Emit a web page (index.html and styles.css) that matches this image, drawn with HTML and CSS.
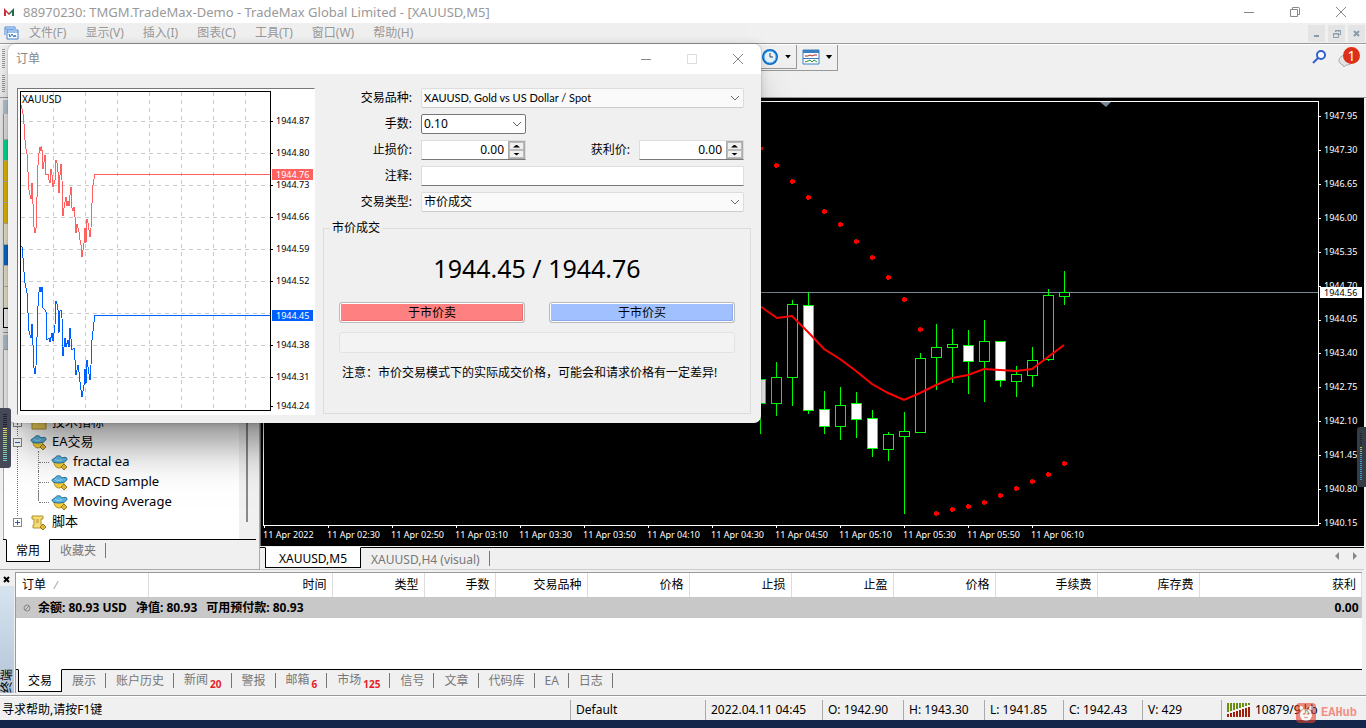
FILE: index.html
```html
<!DOCTYPE html>
<html lang="zh-CN">
	<head>
		<meta charset="UTF-8">
		<title>88970230: TMGM.TradeMax-Demo</title>
		<link rel="stylesheet" href="styles.css">
	</head>
	<body>
		<svg class="defs" width="0" height="0">
			<defs>
				<symbol id="expert" viewBox="0 0 18 16">
					<path d="M3 7h10c0 3-2 6-5 6S3 10 3 7z" fill="#f5cf3c" stroke="#b8921c"/>
					<path d="M1 5c0-1 2-1 3-2 1-3 6-3 7 0 2-1 5-1 5 1 0 2-4 4-8 4S1 7 1 5z" fill="#5cb2de" stroke="#22719c"/>
					<path d="M4 4c2 2 5 2 7 0" fill="none" stroke="#a4d8f0"/>
					<path d="M13 9l3 3-3 3-3-3z" fill="#e2b93b" stroke="#9a7a1c"/>
				</symbol>
				<symbol id="chevron" viewBox="0 0 10 6">
					<path d="M1 1l4 4 4-4" fill="none" stroke="#666"/>
				</symbol>
			</defs>
		</svg>

		<header class="titlebar">
			<svg class="logo" width="12" height="10" viewBox="0 0 12 10"><path d="M1 9V1l5 5v2L3 5v4z" fill="#c8323c"/><path d="M11 9V1L6 6v2l3-3v4z" fill="#1f6b45"/></svg>
			<span class="caption">88970230: TMGM.TradeMax-Demo - TradeMax Global Limited - [XAUUSD,M5]</span>
			<div class="winbtns">
				<button aria-label="最小化"><svg width="12" height="12"><path d="M1 6.500h10" stroke="#888"/></svg></button>
				<button aria-label="还原"><svg width="12" height="12"><path d="M3.500 3V1.500h6a1 1 0 0 1 1 1v6H9M1.500 3.500h7v7h-7z" fill="none" stroke="#888"/></svg></button>
				<button aria-label="关闭"><svg width="12" height="12"><path d="M1 1l10 10M11 1L1 11" stroke="#888"/></svg></button>
			</div>
		</header>

		<nav class="menubar">
			<svg class="appicon" width="15" height="14" viewBox="0 0 15 14"><path d="M1 9V1h10v2M1 3h9M3 13V4h11v9zM3 6h11" fill="#fff" stroke="#3f83d8"/><path d="M5 8l1 3 2-3 2 3 1-2 1 2" fill="none" stroke="#2f6fc4"/></svg>
			<a href="#">文件(F)</a>
			<a href="#">显示(V)</a>
			<a href="#">插入(I)</a>
			<a href="#">图表(C)</a>
			<a href="#">工具(T)</a>
			<a href="#">窗口(W)</a>
			<a href="#">帮助(H)</a>
			<div class="mdibtns">
				<button aria-label="最小化窗口"><svg width="9" height="9"><path d="M2 7h5" stroke="#8a9bab" stroke-width="2"/></svg></button>
				<button aria-label="还原窗口"><svg width="9" height="9"><path d="M3.500 3V1.500h5v4H7M1.500 4.500h5v4h-5zM1 5h6M3 2h6" fill="none" stroke="#8a9bab"/></svg></button>
				<button aria-label="关闭窗口"><svg width="9" height="9"><path d="M2 2l5 5M7 2L2 7" stroke="#8a9bab" stroke-width="2"/></svg></button>
			</div>
		</nav>

		<div class="toolbar">
			<div class="grips"><i></i><i></i></div>
			<div class="tools">
				<button class="tool" aria-label="周期">
					<svg width="18" height="18"><circle cx="9" cy="9" r="7" fill="#e8f4fd" stroke="#0b6cc8" stroke-width="2"/><circle cx="9" cy="9" r="6" fill="none" stroke="#58b4f0"/><path d="M9 5v4h3" fill="none" stroke="#345"/></svg>
					<b class="arrow"></b>
				</button>
				<button class="tool" aria-label="模板">
					<svg width="18" height="16"><path d="M1 1h16v14H1z" fill="#fff" stroke="#3a7fc0"/><path d="M1 1h16v3H1z" fill="#3a7fc0"/><path d="M1 9.500h16" stroke="#3a7fc0"/><path d="M3 7h3l2-1 2 1 2-1h3" fill="none" stroke="#a8281c"/><path d="M3 13l3-1 2-1 2 2 2-2 3 2" fill="none" stroke="#2a9434"/></svg>
					<b class="arrow"></b>
				</button>
			</div>
			<div class="tools-right">
				<button class="plain" aria-label="搜索"><svg width="14" height="14"><circle cx="9" cy="5" r="4" fill="#fff" stroke="#2f5fd0" stroke-width="2"/><path d="M6 8l-5 5" stroke="#2f5fd0" stroke-width="2"/></svg></button>
				<button class="plain chat" aria-label="消息">
					<svg width="16" height="14"><path d="M8 1c4 0 7 2 7 5s-3 5-7 5l-2 2-1-2C2 10 1 8 1 6s3-5 7-5z" fill="#e4e4e8" stroke="#aaa"/></svg>
					<span class="badge">1</span>
				</button>
			</div>
		</div>

		<main class="workspace">
			<aside class="side">
				<section class="watch">
					<div class="panehead"></div>
					<ul class="bands">
						<li></li><li class="green"></li><li class="yellow"></li><li class="yellow"></li><li class="yellow"></li>
						<li class="cream"></li><li class="blue"></li><li class="cream"></li><li class="cream"></li>
					</ul>
					<div class="watchtab"></div>
				</section>
				<section class="navigator">
					<div class="panehead"></div>
					<div class="treebox">
						<ul class="tree">
							<li><i class="box plus"></i><svg width="18" height="16"><path d="M2 1h14v13H2z" fill="#f2d75c" stroke="#b0922a"/></svg>技术指标</li>
							<li><i class="box"></i><svg width="18" height="16"><use href="#expert"/></svg>EA交易
								<ul>
									<li><svg width="18" height="16"><use href="#expert"/></svg>fractal ea</li>
									<li><svg width="18" height="16"><use href="#expert"/></svg>MACD Sample</li>
									<li><svg width="18" height="16"><use href="#expert"/></svg>Moving Average</li>
								</ul>
							</li>
							<li><i class="box plus"></i><svg width="18" height="16"><path d="M2 1h11v3h-2v6h3v3H3v-3h1V4H2z" fill="#f5dc78" stroke="#b0922a"/><path d="M6 5h3M6 7h3" stroke="#b0922a"/><path d="M13 9l3 3-3 3-3-3z" fill="#e2b93b" stroke="#9a7a1c"/></svg>脚本</li>
						</ul>
						<div class="scroll"><i></i></div>
					</div>
					<div class="tabs">
						<button class="tab active">常用</button>
						<button class="tab">收藏夹</button>
					</div>
				</section>
			</aside>

			<section class="charts">
				<div class="chart">
					<div class="plot">
						<svg width="100%" height="100%">
							<g id="market" transform="translate(-264 -102)">
								<path d="M1100 102h11l-5 5z" fill="#778899"/>
								<path d="M264 292.500h4000" stroke="#778899"/>
								<g id="candles" stroke="#0f0"></g>
								<polyline points="744,292 760,306 777,318 792,316 808,332 824,349 840,359 856,371 872,384 888,393 904,400 920,393 936,385 952,378 968,375 984,369 1000,370 1016,371 1032,369 1048,357 1064,345" fill="none" stroke="#f00" stroke-width="2"/>
								<g id="sar" fill="#f00"></g>
							</g>
						</svg>
					</div>
					<div class="prices">
						<span>1947.95</span><span>1947.30</span><span>1946.65</span><span>1946.00</span><span>1945.35</span><span>1944.70</span><span>1944.05</span><span>1943.40</span><span>1942.75</span><span>1942.10</span><span>1941.45</span><span>1940.80</span><span>1940.15</span>
						<b class="last">1944.56</b>
					</div>
					<div class="times">
						<span>11 Apr 2022</span><span>11 Apr 02:30</span><span>11 Apr 02:50</span><span>11 Apr 03:10</span><span>11 Apr 03:30</span><span>11 Apr 03:50</span><span>11 Apr 04:10</span><span>11 Apr 04:30</span><span>11 Apr 04:50</span><span>11 Apr 05:10</span><span>11 Apr 05:30</span><span>11 Apr 05:50</span><span>11 Apr 06:10</span>
					</div>
				</div>
				<div class="tabs">
					<button class="tab active">XAUUSD,M5</button>
					<button class="tab">XAUUSD,H4 (visual)</button>
					<div class="pager"><svg width="24" height="8"><path d="M5 0v8L1 4zM19 0v8l4-4z" fill="#888"/></svg></div>
				</div>
			</section>
		</main>

		<section class="terminal">
			<div class="strip">
				<button class="close" aria-label="关闭终端"><svg width="7" height="7"><path d="M1 1l5 5M6 1L1 6" stroke="#000" stroke-width="2"/></svg></button>
				<div class="striplabel">终端</div>
			</div>
			<div class="termbody">
				<table>
					<colgroup>
						<col class="c-order"><col class="c-time"><col class="c-type"><col class="c-lots"><col class="c-symbol">
						<col class="c-num"><col class="c-num"><col class="c-num"><col class="c-num"><col class="c-num"><col class="c-num"><col>
					</colgroup>
					<thead>
						<tr><th>订单 <small>⁄</small></th><th>时间</th><th>类型</th><th>手数</th><th>交易品种</th><th>价格</th><th>止损</th><th>止盈</th><th>价格</th><th>手续费</th><th>库存费</th><th>获利</th></tr>
					</thead>
					<tbody>
						<tr>
							<td colspan="11"><svg width="8" height="8"><circle cx="4" cy="4" r="3" fill="none" stroke="#888"/><path d="M2 6l4-4" stroke="#888"/></svg><span>余额: 80.93 USD</span><span>净值: 80.93</span><span>可用预付款: 80.93</span></td>
							<td>0.00</td>
						</tr>
					</tbody>
				</table>
				<div class="tabs">
					<button class="tab active">交易</button>
					<button class="tab">展示</button>
					<button class="tab">账户历史</button>
					<button class="tab">新闻<sub>20</sub></button>
					<button class="tab">警报</button>
					<button class="tab">邮箱<sub>6</sub></button>
					<button class="tab">市场<sub>125</sub></button>
					<button class="tab">信号</button>
					<button class="tab">文章</button>
					<button class="tab">代码库</button>
					<button class="tab">EA</button>
					<button class="tab">日志</button>
				</div>
			</div>
		</section>

		<footer class="status">
			<span class="hint">寻求帮助,请按F1键</span>
			<span class="s-profile">Default</span>
			<span class="s-date">2022.04.11 04:45</span>
			<span class="s-open">O: 1942.90</span>
			<span class="s-open">H: 1943.30</span>
			<span class="s-low">L: 1941.85</span>
			<span class="s-low">C: 1942.43</span>
			<span class="s-low">V: 429</span>
			<span class="s-net"><svg width="24" height="14"><path d="M1 0v9M4 0v8M7 0v7M10 0v6M13 0v5M16 0v4M19 0v3M22 0v2" stroke="#6b8e12" stroke-width="2"/><path d="M1 14v-3M4 14v-4M7 14v-5M10 14V8M13 14V7M16 14V6M19 14V5M22 14V4" stroke="#a0200c" stroke-width="2"/></svg>10879/9 kb</span>
		</footer>
		<div class="taskbar"></div>

		<div class="dialog" role="dialog" aria-label="订单">
			<div class="dlgtitle">
				<span>订单</span>
				<div class="winbtns">
					<button aria-label="最小化"><svg width="12" height="12"><path d="M1 6.500h10" stroke="#888"/></svg></button>
					<button aria-label="最大化" disabled><svg width="12" height="12"><path d="M1.500 1.500h9v9h-9z" fill="none" stroke="#ddd"/></svg></button>
					<button aria-label="关闭"><svg width="12" height="12"><path d="M1 1l10 10M11 1L1 11" stroke="#888"/></svg></button>
				</div>
			</div>
			<div class="dlgbody">
				<div class="ticks">
					<div class="tickplot">
						<svg width="100%" height="100%">
							<g transform="translate(-21 -92)">
								<path d="M53.500 92v320M85.500 92v320M117.500 92v320M149.500 92v320M181.500 92v320M213.500 92v320M245.500 92v320M21 121.500h250M21 153.500h250M21 185.500h250M21 217.500h250M21 249.500h250M21 281.500h250M21 313.500h250M21 345.500h250M21 377.500h250" stroke="#c8c8c8" stroke-dasharray="4 4"/>
								<g fill="none" shape-rendering="crispEdges">
									<polyline stroke="#ff6060" points="21,105 22,109 23,114 24,124 25,140 26,149 27,154 28,172 29,190 30,195 31,199 32,183 33,204 34,227 35,233 36,228 37,197 38,165 39,153 40,147 41,151 41,146 42,150 43,169 45,155 46,175 48,174 49,180 50,183 51,169 52,175 53,187 55,180 56,160 57,163 58,172 59,193 60,175 61,164 62,180 63,216 64,208 66,197 67,206 68,201 69,206 70,195 71,187 71,205 73,211 74,207 75,217 76,233 77,224 79,232 80,240 81,245 82,257 84,243 85,228 86,243 87,219 88,223 90,237 91,228 92,203 93,185 95,174 271,174"/>
									<polyline stroke="#0060ff" points="21,246 22,247 23,258 24,272 25,283 26,288 27,293 28,313 29,331 30,335 31,338 32,324 33,345 34,368 35,374 36,366 37,337 38,306 39,292 40,287 41,292 42,287 43,308 45,310 46,312 47,340 49,338 50,342 52,333 53,341 55,325 56,301 57,304 58,310 59,333 60,311 61,310 62,318 63,356 65,338 66,347 68,340 69,347 70,328 72,350 74,348 75,360 76,375 78,365 79,372 80,382 82,397 84,385 85,369 86,384 87,360 88,367 90,380 91,365 92,340 94,322 95,315 271,315"/>
								</g>
							</g>
						</svg>
						<span class="symbol">XAUUSD</span>
					</div>
					<div class="tickprices">
						<span>1944.87</span><span>1944.80</span><span>1944.73</span><span>1944.66</span><span>1944.59</span><span>1944.52</span><span></span><span>1944.38</span><span>1944.31</span><span>1944.24</span>
						<b class="ask">1944.76</b>
						<b class="bid">1944.45</b>
					</div>
				</div>
				<form class="order">
					<div class="fields">
						<label for="symbol">交易品种:</label>
						<div class="combo wide"><select id="symbol"><option>XAUUSD, Gold vs US Dollar / Spot</option></select><svg width="10" height="6"><use href="#chevron"/></svg></div>
						<label for="lots">手数:</label>
						<div class="combo lots"><select id="lots"><option>0.10</option></select><svg width="10" height="6"><use href="#chevron"/></svg></div>
						<label for="sl">止损价:</label>
						<div class="spin"><input id="sl" type="text" value="0.00"><div class="updown"><button type="button" aria-label="增加止损价"><i class="up"></i></button><button type="button" aria-label="减少止损价"><i class="down"></i></button></div></div>
						<label for="tp">获利价:</label>
						<div class="spin"><input id="tp" type="text" value="0.00"><div class="updown"><button type="button" aria-label="增加获利价"><i class="up"></i></button><button type="button" aria-label="减少获利价"><i class="down"></i></button></div></div>
						<label for="comment">注释:</label>
						<input class="comment wide" id="comment" type="text">
						<label for="kind">交易类型:</label>
						<div class="combo wide"><select id="kind"><option>市价成交</option></select><svg width="10" height="6"><use href="#chevron"/></svg></div>
					</div>
					<fieldset>
						<legend>市价成交</legend>
						<div class="quote">1944.45 / 1944.76</div>
						<div class="deal">
							<button type="button" class="sell">于市价卖</button>
							<button type="button" class="buy">于市价买</button>
						</div>
						<button type="button" class="blank" aria-label="平仓" disabled></button>
						<p>注意：市价交易模式下的实际成交价格，可能会和请求价格有一定差异!</p>
					</fieldset>
				</form>
			</div>
		</div>

		<div class="meter left"><i></i></div>
		<div class="meter right"><i></i></div>
		<div class="watermark"><svg width="20" height="20"><rect width="20" height="20" rx="4" fill="#e8402c"/><circle cx="10" cy="12" r="6" fill="#fff"/><circle cx="5" cy="5" r="2" fill="#fff"/><circle cx="15" cy="5" r="2" fill="#fff"/><circle cx="8" cy="11" r="1" fill="#e8402c"/><circle cx="12" cy="11" r="1" fill="#e8402c"/><path d="M8 14c1 1 3 1 4 0" fill="none" stroke="#e8402c"/></svg>EAHub</div>

		<script>
			//x, high, top, bottom, low, 1=bear
			var bars=[
				[760,370,379,403,434,1],[776,362,377,403,416,0],[792,300,304,377,406,0],[808,292,305,410,414,1],
				[824,391,409,426,434,1],[840,387,405,426,440,0],[856,392,403,419,438,1],[872,410,418,448,457,1],
				[888,432,434,449,461,0],[904,412,431,436,514,0],[920,353,358,432,433,0],[936,324,347,357,390,0],
				[952,329,344,347,383,0],[968,330,345,361,394,1],[984,320,341,361,402,0],[1000,341,341,380,387,1],
				[1016,366,374,381,397,0],[1032,347,360,375,387,0],[1048,289,295,359,361,0],[1064,271,292,296,305,0]
			];
			var dots=[[760,148],[776,165],[792,181],[808,197],[824,211],[840,224],[856,241],[872,257],[888,277],[904,299],[920,329],
				[936,513],[952,509],[968,506],[984,502],[1000,495],[1016,488],[1032,481],[1048,474],[1064,463]];
			var html='';
			for(var i=0;i<bars.length;i++){
				var b=bars[i];
				html+='<path d="M'+(b[0]+0.5)+' '+b[1]+'V'+b[4]+'"/>';
				html+='<rect x="'+(b[0]-4.5)+'" y="'+(b[2]+0.5)+'" width="10" height="'+(b[3]-b[2])+'" fill="'+(b[5]?'#fff':'#000')+'"/>';
			}
			document.getElementById('candles').innerHTML=html;
			html='';
			for(var i=0;i<dots.length;i++){
				html+='<path d="M'+(dots[i][0]-2)+' '+(dots[i][1]-1)+'h1v-1h2v1h2v3h-2v1h-2v-1h-1z"/>';
			}
			document.getElementById('sar').innerHTML=html;
		</script>
	</body>
</html>
```
FILE: styles.css
```css
*{margin:0;padding:0;box-sizing:border-box;}
html{height: 100%;}
body{
	position: relative;
	display: flex;
	flex-direction: column;
	min-height: 100%;
	background: #f0f0f0;
	font: 12px/16px "Noto Sans","Noto Sans CJK SC",sans-serif;
	color: #000;
	overflow: hidden;
}
ul{list-style: none;}
a{color: inherit;text-decoration: none;}
button,input,select{font: inherit;color: inherit;}
button{border: 0;background: none;}
svg{flex: none;}
.defs{position: absolute;}

/* title and menu */
.titlebar{
	display: flex;
	align-items: center;
	height: 23px;
	padding: 0 2px 0 3px;
	background: #fff;
	color: #999;
}
.caption{margin-left: 8px;font-size: 13px;}
.winbtns{display: flex;margin-left: auto;}
.winbtns button{
	display: flex;
	align-items: center;
	justify-content: center;
	width: 46px;
	height: 20px;
}
.menubar{
	display: flex;
	align-items: center;
	gap: 1px;
	height: 21px;
	padding: 0 1px 0 4px;
	border-bottom: 1px solid #999;
	color: #999;
}
.menubar a{padding: 0 9px;}
.mdibtns{display: flex;gap: 3px;margin-left: auto;}
.mdibtns button{
	display: flex;
	align-items: center;
	justify-content: center;
	width: 17px;
	height: 17px;
	background: #e4e4e4;
}

/* toolbar */
.toolbar{
	display: flex;
	height: 54px;
	border-top: 1px solid #fff;
	border-bottom: 1px solid #999;
}
.grips{
	display: flex;
	flex-direction: column;
	gap: 7px;
	width: 8px;
	padding: 4px 2px;
}
.grips i{height: 20px;width: 3px;background: repeating-linear-gradient(#999 0 1px,#f0f0f0 1px 2px);}
.tools{
	display: flex;
	justify-content: flex-end;
	width: 830px;
	height: 26px;
	border-right: 1px solid #999;
	border-bottom: 1px solid #999;
}
.tool{
	display: flex;
	align-items: center;
	gap: 5px;
	height: 24px;
	padding: 0 4px 0 5px;
}
.tool:first-child{border-right: 1px solid #999;border-bottom: 1px solid #999;}
.arrow{
	width: 8px;
	height: 4px;
	background: #000;
	clip-path: polygon(10% 0,90% 0,50% 100%);
}
.tools-right{
	display: flex;
	align-items: flex-start;
	gap: 12px;
	margin-left: auto;
	padding: 5px 12px;
}
.plain{display: block;}
.chat{position: relative;padding-top: 4px;}
.badge{
	position: absolute;
	left: 5px;
	top: -3px;
	width: 17px;
	height: 17px;
	border-radius: 50%;
	background: #de3018;
	color: #fff;
	font-size: 14px;
	line-height: 17px;
}

/* left panes */
.workspace{display: flex;flex: 1;min-height: 0;}
.side{
	display: flex;
	flex-direction: column;
	width: 260px;
	padding: 2px 3px 2px 3px;
	border-right: 1px solid #aaa;
	border-bottom: 1px solid #aaa;
}
.panehead{height: 14px;background: #b9c8d6;}
.watch{height: 233px;border-bottom: 1px solid #999;}
.bands{border-left: 1px solid #999;}
.bands li{height: 21px;border-bottom: 1px solid #bbb;}
.bands li:first-child{height: 26px;}
.bands .green{background: #00e89c;}
.bands .yellow{background: #f0c000;}
.bands .cream{background: #f7f2d6;}
.bands .blue{background: #0a6cd0;}
.watchtab{height: 20px;width: 44px;border: 1px solid #000;background: #fff;}
.navigator{display: flex;flex-direction: column;flex: 1;padding-top: 2px;}
.treebox{
	display: flex;
	flex: 1;
	border: 1px solid #aaa;
	border-width: 1px 0 0 1px;
	background: #fff;
}
.tree{
	display: flex;
	flex-direction: column;
	flex: 1;
	justify-content: flex-end;
	padding: 0 0 8px 9px;
	font-size: 13px;
}
.tree li{line-height: 20px;}
.tree > li{position: relative;}
.tree > li:not(:last-child)::after{
	content: "";
	position: absolute;
	left: 4px;
	top: 15px;
	bottom: -5px;
	border-left: 1px dotted #777;
}
.tree svg{margin: 0 4px 0 8px;vertical-align: middle;}
.tree ul{margin-left: 25px;}
.tree ul li{border-left: 1px dotted #777;}
.tree ul li:last-child{
	border-left: 0;
	background: linear-gradient(#888,#888) 0 0/1px 10px no-repeat;
	padding-left: 1px;
}
.tree ul li::before{
	content: "";
	display: inline-block;
	width: 10px;
	border-top: 1px dotted #777;
	vertical-align: middle;
}
.tree ul svg{margin: 0 4px 0 2px;}
.box{
	display: inline-block;
	width: 9px;
	height: 9px;
	border: 1px solid #888;
	background: linear-gradient(#335ea8,#335ea8) center/5px 1px no-repeat #fff;
	vertical-align: middle;
}
.plus{background: linear-gradient(#335ea8,#335ea8) center/5px 1px no-repeat,linear-gradient(#335ea8,#335ea8) center/1px 5px no-repeat #fff;}
.scroll{width: 17px;background: #f0f0f0;}
.scroll i{display: block;width: 2px;height: 172px;margin-left: 7px;background: #888;}

/* tabs */
.tabs{
	display: flex;
	align-items: flex-start;
	border-top: 1px solid #000;
	color: #777;
}
.tab{position: relative;height: 21px;padding: 0 10px;}
.tab:not(.active)::after{
	content: "";
	position: absolute;
	right: 0;
	top: 3px;
	height: 15px;
	border-right: 1px solid #777;
}
.tab.active{
	height: 23px;
	margin: -1px 0 0 2px;
	padding: 0 9px;
	border: 1px solid #000;
	border-top-color: #fff;
	background: #fff;
	color: #000;
}
.tab sub{
	margin-left: 2px;
	font-size: 10px;
	font-weight: bold;
	line-height: 10px;
	color: #e81c28;
}
.navigator .tabs{height: 28px;padding-left: 1px;}

/* main chart */
.charts{display: flex;flex-direction: column;flex: 1;min-width: 0;padding-right: 2px;}
.chart{
	display: grid;
	grid-template: 1fr 20px / 1fr 45px;
	flex: 1;
	min-height: 0;
	padding: 3px 0 0 2px;
	border-left: 1px solid #696969;
	background: #000;
	color: #fff;
	font-size: 9px;
}
.plot{min-width: 0;min-height: 0;border: 1px solid #fff;}
.plot svg,.tickplot svg{display: block;}
.prices{
	position: relative;
	grid-row: 1 / 3;
	grid-column: 2;
	display: flex;
	flex-direction: column;
	justify-content: space-between;
	padding: 9px 0 17px;
	line-height: 12px;
}
.prices span::before,.tickprices span:not(:empty)::before{
	content: "";
	display: inline-block;
	width: 2px;
	margin-right: 3px;
	border-top: 1px solid;
	vertical-align: middle;
}
.last,.ask,.bid{
	position: absolute;
	left: 1px;
	right: 2px;
	padding-left: 4px;
	font-weight: normal;
	line-height: 11px;
}
.last{top: 186px;background: #fff;color: #000;}
.times{display: flex;min-width: 0;overflow: hidden;}
.times span{flex: 0 0 64px;line-height: 18px;white-space: nowrap;}
.times span::before{content: "";display: block;height: 2px;margin-left: 1px;border-left: 1px solid #fff;margin-bottom: -2px;}
.charts .tabs{
	height: 23px;
	margin-top: 1px;
	padding-left: 1px;
	border-bottom: 1px solid #ccc;
}
.charts .tab{height: 21px;padding-top: 2px;}
.charts .tab.active{height: 21px;margin-left: 4px;padding: 2px 13px 0;}
.pager{margin: 4px 6px 0 auto;line-height: 8px;}

/* terminal */
.terminal{
	display: flex;
	height: 126px;
	padding: 2px 4px 2px 0;
	border-bottom: 1px solid #999;
}
.strip{
	display: flex;
	flex-direction: column;
	width: 15px;
	padding-right: 1px;
}
.close{height: 14px;}
.close svg{display: block;margin-left: 3px;}
.striplabel{
	flex: 1;
	background: linear-gradient(#b4c4d6,#d6e4f0);
	writing-mode: vertical-rl;
	text-orientation: sideways;
	transform: rotate(180deg);
	line-height: 14px;
}
.termbody{
	display: flex;
	flex-direction: column;
	flex: 1;
	min-width: 0;
	border-left: 1px solid #999;
	border-top: 1px solid #999;
	background: #fff;
}
.termbody .tabs{margin-top: auto;height: 24px;background: #f0f0f0;}
table{width: 100%;table-layout: fixed;border-collapse: collapse;}
th{
	height: 24px;
	padding-right: 5px;
	border-right: 1px solid #ddd;
	font-weight: normal;
	text-align: right;
}
th:first-child{text-align: left;padding-left: 6px;}
th small{margin-left: 6px;color: #888;}
tbody tr{background: #c8c8c8;font-weight: bold;}
td{height: 21px;padding: 0 3px 0 7px;text-align: right;}
td:first-child{text-align: left;}
td svg{margin-right: 7px;}
td span{margin-right: 9px;}
.c-order{width: 132px;}
.c-time{width: 184px;}
.c-type{width: 92px;}
.c-lots{width: 71px;}
.c-symbol{width: 92px;}
.c-num{width: 102px;}

/* status line */
.status{
	display: flex;
	align-items: center;
	height: 24px;
	padding-top: 2px;
	border-top: 1px solid #fff;
	white-space: nowrap;
}
.status span{
	padding-left: 5px;
	border-left: 1px solid #aaa;
	line-height: 20px;
}
.status .hint{flex: 1;border: 0;padding-left: 2px;}
.s-profile{width: 135px;}
.s-date{width: 117px;}
.s-open{width: 81px;}
.s-low{width: 79px;}
.s-net{display: flex;align-items: center;gap: 4px;width: 145px;}
.taskbar{height: 8px;background: #14274a;}

/* order dialog */
.dialog{
	position: absolute;
	left: 8px;
	top: 44px;
	width: 753px;
	background: #f0f0f0;
	border-radius: 7px;
	overflow: hidden;
	box-shadow: 0 32px 44px -14px rgba(0,0,0,.5),0 0 10px rgba(0,0,0,.15),0 0 1px rgba(0,0,0,.6);
}
.dlgtitle{
	display: flex;
	align-items: center;
	height: 30px;
	padding-left: 8px;
	background: #fff;
	color: #888;
}
.dlgbody{
	display: flex;
	gap: 9px;
	padding: 14px 10px 8px 9px;
}
.ticks{
	display: flex;
	flex: none;
	width: 298px;
	height: 327px;
	padding: 2px 0 1px 2px;
	border: 1px solid #777;
	border-right-color: #fff;
	border-bottom-color: #fff;
	background: #fff;
	font-size: 9px;
}
.tickplot{position: relative;flex: none;width: 251px;height: 320px;border: 1px solid #000;}
.symbol{position: absolute;left: 1px;top: 1px;font-size: 10px;line-height: 12px;}
.tickprices{
	position: relative;
	display: flex;
	flex-direction: column;
	flex: 1;
	padding-top: 14px;
}
.tickprices span{flex: none;height: 32px;line-height: 32px;}
.tickprices span:last-of-type{height: 26px;line-height: 26px;}
.ask,.bid{color: #fff;right: 1px;}
.ask{top: 78px;background: #ff6060;}
.bid{top: 219px;background: #0060ff;}
.order{flex: 1;min-width: 0;}
.fields{
	display: grid;
	grid-template-columns: 88px 105px 95px 1fr;
	grid-auto-rows: 20px;
	gap: 6px 9px;
	align-items: center;
	padding-right: 7px;
}
.fields label{text-align: right;white-space: nowrap;}
.wide{grid-column: 2 / 5;}
.combo{display: grid;align-items: center;height: 20px;}
.combo select{
	grid-area: 1 / 1;
	width: 100%;
	height: 20px;
	padding-left: 2px;
	border: 1px solid #ddd;
	border-bottom-color: #ccc;
	border-radius: 2px;
	background: #fafafa;
	appearance: none;
}
#symbol{font-family: Lato,sans-serif;font-size: 11px;}
.combo svg{grid-area: 1 / 1;justify-self: end;margin-right: 4px;pointer-events: none;}
.lots{grid-column: 2 / 5;width: 105px;}
.lots select{border-color: #777;background: #fff;}
.spin{
	display: flex;
	min-width: 0;
	height: 20px;
	background: #fff;
	border: 1px solid #ddd;
	border-bottom-color: #777;
}
.spin input{flex: 1;min-width: 0;border: 0;background: none;padding-right: 4px;text-align: right;}
.updown{display: flex;flex-direction: column;width: 17px;border: 1px solid #aaa;}
.updown button{
	display: flex;
	flex: 1;
	align-items: center;
	justify-content: center;
	border: 1px solid #bbb;
	background: #f0f0f0;
}
.updown i{width: 7px;height: 3px;flex: none;background: #000;clip-path: polygon(50% 0,100% 100%,0 100%);}
.updown .down{clip-path: polygon(0 0,100% 0,50% 100%);}
.comment{height: 20px;border: 1px solid #ddd;border-bottom-color: #777;}
fieldset{
	height: 194px;
	margin: 8px 0 0 -1px;
	padding: 0 15px;
	border: 1px solid #dcdcdc;
}
legend{margin-left: -9px;padding: 0 2px;}
.quote{margin-top: 12px;font-size: 25px;line-height: 40px;text-align: center;}
.deal{display: flex;gap: 24px;margin-top: 14px;}
.deal button{
	flex: 1;
	height: 21px;
	border: 1px solid #bbb;
	border-radius: 3px;
	line-height: 17px;
}
.sell{background: #ff8080;box-shadow: inset 0 0 0 1px #fff,inset -2px -2px 0 #ee6e6e;}
.buy{background: #a0c0ff;box-shadow: inset 0 0 0 1px #fff,inset -2px -2px 0 #8aaaf0;}
.blank{
	display: block;
	width: 100%;
	height: 21px;
	margin-top: 9px;
	border: 1px solid #e2e2e2;
	border-radius: 3px;
	background: #f3f3f3;
}
fieldset p{margin-top: 12px;padding-left: 3px;white-space: nowrap;}

/* level meters on the screen edges */
.meter{
	position: absolute;
	width: 11px;
	height: 60px;
	padding: 6px 4px 6px 3px;
	border-radius: 0 3px 3px 0;
	background: #454856;
}
.meter.left{left: 0;top: 408px;}
.meter.right{right: 0;top: 427px;width: 9px;border-radius: 3px 0 0 3px;background: #343c46;}
.meter i{
	display: block;
	height: 100%;
	background: repeating-linear-gradient(transparent 0 1px,#454856 1px 2px),linear-gradient(#23242e 28%,#e8cc5c 28%,#9ad08c 60%,#60c8c8);
}
.meter.right i{width: 2px;background: repeating-linear-gradient(transparent 0 1px,#343c46 1px 2px),linear-gradient(#20242c 28%,#d8c040 28%,#3c98c8 50%,#3c98c8);}
.watermark{
	position: absolute;
	right: 9px;
	bottom: 5px;
	display: flex;
	align-items: center;
	gap: 5px;
	opacity: .6;
	color: #f0503c;
	font: bold 12px/20px "Liberation Mono",monospace;
}
```
